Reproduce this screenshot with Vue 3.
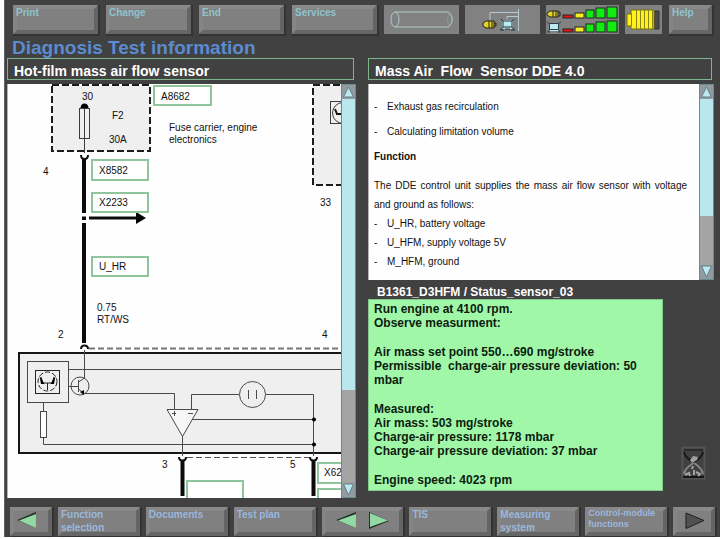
<script setup>
const menu = ['Print', 'Change', 'End', 'Services']

const infoTitle = 'Mass Air  Flow  Sensor DDE 4.0'

const leftKeys = ['Function selection', 'Documents', 'Test plan']
const rightKeys = [
  { label: 'TIS' },
  { label: 'Measuring system' },
  { label: 'Control-module functions', small: true },
]

const readings = [
  ['Run engine at 4100 rpm.', 'Observe measurment:'],
  ['Air mass set point 550…690 mg/stroke', 'Permissible  charge-air pressure deviation: 50 mbar'],
  [
    'Measured:',
    'Air mass: 503 mg/stroke',
    'Charge-air pressure: 1178 mbar',
    'Charge-air pressure deviation: 37 mbar',
  ],
  ['Engine speed: 4023 rpm'],
]
</script>

<template>
  <div class="screen">
    <header class="toolbar">
      <nav class="menu">
        <button v-for="item in menu" :key="item" class="key" type="button">{{ item }}</button>
      </nav>
      <div class="indicators">
        <div class="indicator wide">
          <svg viewBox="0 0 75 29" fill="none" stroke="#b4cad0" stroke-width="1">
            <ellipse cx="11" cy="14.5" rx="4" ry="7.5" />
            <path d="M11 7H65L68 12V17L65 22H11" />
            <path d="M65 7Q62 14 65 22" stroke="#8f9a9d" />
          </svg>
        </div>
        <div class="indicator wide">
          <svg viewBox="0 0 75 29" fill="none">
            <path d="M25 15V7.500H54M42 14V11.500H54M53.500 4V26" stroke="#b4cad0" />
            <path d="M21 16H29V23H21L18 21V18Z" fill="#e2d32a" stroke="#242410" />
            <path d="M24 16V23M27 16V23M29 18H31V21H29" stroke="#242410" />
            <path d="M37 15H48V24H37Z" fill="#bdeaf2" />
            <path d="M38 16H47V22H38ZM35 25H39M46 25H50M36 14L38 16M49 14L47 16M38 22L36 25M47 22L49 25M40 24H45" stroke="#243238" />
          </svg>
        </div>
        <div class="indicator levels">
          <svg viewBox="0 0 73 29" stroke="#222" stroke-width="1">
            <path d="M4 6H12V12H4L1 10V8Z" fill="#e2d32a" />
            <path d="M7 6V12M10 6V12M12 7H14V11H12" fill="none" />
            <path d="M3 18H13V26H3Z" fill="#bdeaf2" stroke="none" />
            <path d="M3.500 18.500H12.500V24.500H3.500ZM1 27H4M12 27H15M1 17L4 19M15 17L12 19M4 24L2 27M12 24L14 27" fill="none" stroke="#28404a" />
            <g v-for="row in [0, 14]" :key="row">
              <rect x="17" :y="10 + row" width="10" height="3" fill="#e01818" />
              <rect x="29" :y="8 + row" width="9" height="5" fill="#f7ee1f" />
              <rect x="40" :y="5 + row" width="8" height="8" fill="#10ed10" />
              <rect x="50" :y="3 + row" width="9" height="10" fill="#10ed10" />
              <rect x="61" :y="2 + row" width="10" height="11" fill="#10ed10" />
            </g>
          </svg>
        </div>
        <div class="indicator battery">
          <svg viewBox="0 0 37 29">
            <path d="M29 6H34V24H29Z" fill="#4a4a4a" stroke="#303030" />
            <path d="M6 5H29V24H6V21H2V9H6Z" fill="#fff21c" stroke="#77710c" />
            <path d="M6.500 8V21M11.500 5V24M15.500 5V24M19.500 5V24M23.500 5V24M27.500 5V24" stroke="#8a8416" />
          </svg>
        </div>
      </div>
      <button class="key" type="button">Help</button>
    </header>

    <h1>Diagnosis Test information</h1>

    <main class="columns">
      <section class="column">
        <h2>Hot-film mass air flow sensor</h2>
        <div class="pane diagram-pane">
          <svg class="diagram" viewBox="8 84 334 414" preserveAspectRatio="xMinYMin slice" role="img" aria-label="Sensor wiring diagram">
            <g fill="#efefef" stroke="#1c1c1c" stroke-width="2" stroke-dasharray="7 3">
              <rect x="52" y="85" width="98" height="66" />
              <rect x="313" y="85" width="60" height="100" />
            </g>
            <g fill="none" stroke="#3c3c3c">
              <rect x="79.500" y="108.500" width="10" height="30" />
              <path d="M84.500 108V153" stroke-width="1" />
              <rect x="330.500" y="101.500" width="30" height="22" />
              <circle cx="343" cy="113" r="10.500" />
              <path d="M335 109L337 114H343" stroke="#111" stroke-width="2" />
            </g>
            <path d="M80.500 108A4 4.500 0 1 1 88.500 108Z" />
            <path d="M81 155Q81 159 84.500 159T88 155" fill="none" stroke="#111" stroke-width="2" />
            <path d="M84 159V213M84 216.500V220M84 223V343" stroke="#0c0c0c" stroke-width="4" />
            <path d="M89 218H138" stroke="#0c0c0c" stroke-width="3" />
            <path d="M136 212L146 218L136 224Z" />

            <path d="M89 348.500H342" stroke="#777" stroke-width="2" stroke-dasharray="6 3" />
            <path d="M81 349Q81 345.500 84.500 345.500T88 349" fill="none" stroke="#111" stroke-width="2" />
            <rect x="19" y="353" width="340" height="100" fill="#efefef" stroke="#161616" stroke-width="2" />
            <g fill="none" stroke="#494949" stroke-width="1">
              <rect x="27.500" y="361.500" width="41" height="41" />
              <rect x="35.500" y="370.500" width="24" height="23" stroke="#222" />
              <circle cx="47.500" cy="381.500" r="9.500" stroke="#222" stroke-dasharray="5 2" />
              <path d="M68 369.500H342M84.500 350V378L78.500 382" />
              <circle cx="80" cy="386" r="9" />
              <path d="M68 386.500H78M78.500 380V392" />
              <path d="M78.500 389L84 393.500H174.500V409.500" />
              <path d="M167 409.500H198L182.500 436.500Z" fill="#f6f6f6" />
              <path d="M172 413.500H176M174.500 411V416M188 413.500H193" />
              <path d="M191.500 409V394.500H239M266 394.500H313.500V456M192 419.500H313.500" />
              <circle cx="252.500" cy="394.500" r="13" />
              <path d="M248.500 390V399M256.500 390V399" />
              <path d="M43.500 403V411M43.500 437.500V444.500H313.500M182.500 436V456" />
              <rect x="40.500" y="411.500" width="6" height="26" fill="#fff" />
            </g>
            <path d="M41 377L43 383H52L54 377M47.500 383V390" fill="none" stroke="#222" stroke-width="1" />
            <path d="M39.500 376L44.500 384L41 384ZM55.500 376L50.500 384L54 384ZM80 392L84 390V395Z" />
            <circle cx="314" cy="419.500" r="2" />
            <circle cx="314" cy="444.500" r="2" />

            <path d="M187 457.500H309" stroke="#555" stroke-width="1" stroke-dasharray="6 3" />
            <path d="M179 457Q179 460.500 182.500 460.500T186 457M310 457Q310 460.500 313.500 460.500T317 457" fill="none" stroke="#111" stroke-width="2" />
            <path d="M182.500 461V496M313.500 461V496" stroke="#0c0c0c" stroke-width="4" />

            <g fill="#fff" stroke="#8fc49c" stroke-width="2">
              <rect x="154" y="86" width="57" height="19" />
              <rect x="92" y="160" width="56" height="20" />
              <rect x="92" y="193" width="56" height="19" />
              <rect x="92" y="257" width="56" height="19" />
              <rect x="187" y="481" width="56" height="30" />
              <rect x="318" y="463" width="56" height="20" />
              <rect x="318" y="489" width="56" height="20" />
            </g>

            <g class="labels">
              <text x="82" y="100">30</text>
              <text x="112" y="119">F2</text>
              <text x="109" y="143">30A</text>
              <text x="161" y="100">A8682</text>
              <text x="169" y="131">Fuse carrier, engine</text>
              <text x="169" y="143">electronics</text>
              <text x="43" y="175">4</text>
              <text x="99" y="174">X8582</text>
              <text x="99" y="206">X2233</text>
              <text x="320" y="206">33</text>
              <text x="99" y="270">U_HR</text>
              <text x="97" y="311">0.75</text>
              <text x="97" y="323">RT/WS</text>
              <text x="58" y="338">2</text>
              <text x="322" y="338">4</text>
              <text x="162" y="468">3</text>
              <text x="290" y="468">5</text>
              <text x="324" y="476">X62</text>
            </g>
          </svg>
          <div class="scroll">
            <button class="arrow" type="button" aria-label="Scroll diagram up">
              <svg viewBox="0 0 12 14"><path d="M1 12L6 2L11 12Z" fill="#bfe9f0" stroke="#5f8087" /></svg>
            </button>
            <div class="rail rail-long"></div>
            <div class="thumb thumb-long"></div>
            <button class="arrow" type="button" aria-label="Scroll diagram down">
              <svg viewBox="0 0 12 14"><path d="M1 1L6 12L11 1Z" fill="#bfe9f0" stroke="#5f8087" /></svg>
            </button>
          </div>
        </div>
      </section>

      <section class="column">
        <h2>{{ infoTitle }}</h2>
        <div class="pane">
          <article class="info">
            <ul class="spaced">
              <li>Exhaust gas recirculation</li>
              <li>Calculating limitation volume</li>
            </ul>
            <h3>Function</h3>
            <p>The DDE control unit supplies the mass air flow sensor with voltage and ground as follows:</p>
            <ul>
              <li>U_HR, battery voltage</li>
              <li>U_HFM, supply voltage 5V</li>
              <li>M_HFM, ground</li>
            </ul>
          </article>
          <div class="scroll">
            <button class="arrow" type="button" aria-label="Scroll text up">
              <svg viewBox="0 0 12 14"><path d="M1 12L6 2L11 12Z" fill="#bfe9f0" stroke="#5f8087" /></svg>
            </button>
            <div class="rail rail-short"></div>
            <div class="thumb thumb-short"></div>
            <button class="arrow" type="button" aria-label="Scroll text down">
              <svg viewBox="0 0 12 14"><path d="M1 1L6 12L11 1Z" fill="#bfe9f0" stroke="#5f8087" /></svg>
            </button>
          </div>
        </div>
        <h3 class="status-title">B1361_D3HFM / Status_sensor_03</h3>
        <div class="status">
          <div class="readings">
            <div v-for="(group, index) in readings" :key="index">
              <p v-for="line in group" :key="line">{{ line }}</p>
            </div>
          </div>
          <svg class="hourglass" viewBox="0 0 26 34" fill="none">
            <rect x="1.500" y="1.500" width="22" height="31" stroke="#545454" stroke-width="2" />
            <path d="M3 4H22" stroke="#191919" stroke-width="1" />
            <path d="M3 6Q4 12 12.500 16Q21 12 22 6" stroke="#191919" stroke-width="2" />
            <path d="M5 11Q12 14 20 11L12.500 16Z" fill="#202020" />
            <path d="M9 14L12 10L17 11L16 14L11 17Z" fill="#a0a0a0" />
            <path d="M12.500 17Q4 22 3 28M13 17Q21 22 22 28" stroke="#858585" stroke-width="2" />
            <path d="M2 31H23" stroke="#151515" stroke-width="2" />
            <path d="M4 29L8 27L9 30M12 20L11 23M13 24V29M15 26L19 28L17 30" stroke="#a2a2a2" stroke-width="2" />
          </svg>
        </div>
      </section>
    </main>

    <footer class="keys">
      <button class="key glyph" type="button" aria-label="Back">
        <svg viewBox="0 0 42 29"><path d="M7 13L26 5V21Z" fill="#1f3325" /><path d="M9 13.500L26 7V21Z" fill="#93d9a4" /></svg>
      </button>
      <button v-for="label in leftKeys" :key="label" class="key" type="button">{{ label }}</button>
      <div class="key pager">
        <button type="button" aria-label="Previous page">
          <svg viewBox="0 0 41 29"><path d="M14 13L34 5V21Z" fill="#1f3325" /><path d="M16 13.500L34 7V21Z" fill="#93d9a4" /></svg>
        </button>
        <button type="button" aria-label="Next page">
          <svg viewBox="0 0 41 29"><path d="M6 5L26 14L6 22Z" fill="#1f3325" /><path d="M7 6L25 13.500L7 20Z" fill="#93d9a4" /></svg>
        </button>
      </div>
      <button v-for="item in rightKeys" :key="item.label" class="key" :class="{ small: item.small }" type="button">{{ item.label }}</button>
      <button class="key glyph" type="button" aria-label="Forward">
        <svg viewBox="0 0 42 29"><path d="M13 6L31 13.500L13 21.500Z" fill="#515151" stroke="#1e1e1e" /></svg>
      </button>
    </footer>
  </div>
</template>

<style>
body {
  background: #fdfdfd;
}
</style>

<style scoped>
.screen {
  box-sizing: border-box;
  display: flex;
  flex-direction: column;
  min-height: calc(100vh - 2px);
  margin-left: 4px;
  border-left: 1px solid #606468;
  background: #414141;
  font-family: "Liberation Sans", Arial, sans-serif;
}

h1,
h2,
h3,
p,
ul {
  margin: 0;
  padding: 0;
}

svg {
  display: block;
}

.toolbar {
  display: grid;
  grid-template-columns: 364fr 278fr 43fr;
  gap: 7px;
  padding: 5px 8px 0;
}

.menu {
  display: grid;
  grid-template-columns: repeat(4, minmax(0, 1fr));
  gap: 8px;
}

.indicators {
  display: grid;
  grid-template-columns: 75fr 75fr 73fr 37fr;
  gap: 6px;
}

.indicator {
  display: flex;
  justify-content: center;
  background: #818181;
}

.indicator svg {
  width: 100%;
  height: 29px;
}

.key {
  position: relative;
  isolation: isolate;
  min-width: 0;
  height: 29px;
  margin: 0;
  padding: 1px 3px;
  border: 0;
  background: #808080;
  box-shadow: 1px 1px 0 1px #333333;
  color: #8fc4cf;
  font: bold 10px/13px "Liberation Sans", Arial, sans-serif;
  text-align: left;
  display: flex;
  align-items: flex-start;
}

.key::before {
  content: "";
  position: absolute;
  inset: 0;
  z-index: -1;
  border: 4px solid;
  border-color: #898989 #646464 #666666 #858585;
}

.columns {
  display: grid;
  grid-template-columns: 349fr 346fr;
  gap: 12px;
  flex: 1;
  padding: 0 6px 0 2px;
}

.column {
  display: flex;
  flex-direction: column;
  min-width: 0;
}

h1 {
  padding: 4px 0 0 7px;
  color: #5b8bd0;
  font-size: 19px;
  line-height: 20px;
}

h2 {
  margin: 0 2px 4px 0;
  padding: 4px 6px 0;
  border: 1px solid #7fb58a;
  color: #fff;
  font-size: 14px;
  line-height: 16px;
  white-space: pre;
}

.pane {
  box-sizing: border-box;
  display: flex;
  background: #fefefe;
}

.diagram-pane {
  flex: 1;
}

.diagram {
  flex: 1;
  width: 0;
  min-height: 414px;
  border-left: 1px solid #b5b5b5;
  box-sizing: border-box;
}

.labels {
  font-size: 10px;
  fill: #111;
}

.scroll {
  box-sizing: border-box;
  display: flex;
  flex-direction: column;
  flex: none;
  width: 15px;
  border: 1px solid #668b93;
}

.arrow {
  height: 14px;
  padding: 0;
  border: 0;
  background: #929ba0;
}

.arrow svg {
  width: 100%;
  height: 14px;
}

.rail {
  background: #bae6ed;
}

.thumb {
  background: #a4a4a4;
}

.rail-long {
  flex: 292;
}

.thumb-long {
  flex: 93;
}

.rail-short {
  flex: 118;
}

.thumb-short {
  flex: 49;
}

.info {
  flex: 1;
  padding: 13px 12px 9px 5px;
  border-left: 1px solid #b5b5b5;
  color: #111;
  font-size: 10px;
  line-height: 19px;
}

.info h3 {
  margin-bottom: 10px;
  font-size: 10px;
}

.info p {
  text-align: justify;
}

.info ul {
  list-style: none;
}

.info li {
  display: flex;
}

.info li::before {
  content: "-";
  flex: none;
  width: 13px;
}

.spaced li {
  margin-bottom: 6px;
}

.status-title {
  margin-top: 5px;
  padding-left: 9px;
  color: #fff;
  font-size: 12px;
  line-height: 14px;
}

.status {
  display: grid;
  grid-template-columns: 295fr 51fr;
  align-items: end;
}

.readings {
  display: grid;
  gap: 15px;
  padding: 2px 5px 3px;
  border: 1px solid #82c98c;
  background: #a1f7a8;
  color: #0c1c0e;
  font-size: 12px;
  font-weight: bold;
  line-height: 14px;
  white-space: pre-wrap;
}

.hourglass {
  justify-self: center;
  width: 26px;
  height: 34px;
  margin: 0 0 11px 10px;
}

.keys {
  display: grid;
  grid-template-columns: 42fr repeat(7, minmax(0, 82fr)) 42fr;
  gap: 6px;
  padding: 9px 5px 1px;
}

.keys .key {
  color: #9ab8de;
}

.keys .glyph {
  padding: 0;
}

.keys .small {
  font-size: 9px;
  line-height: 11px;
}

.glyph svg,
.pager svg {
  width: 100%;
  height: 29px;
}

.pager {
  padding: 0;
}

.pager button {
  flex: 1;
  min-width: 0;
  padding: 0;
  border: 0;
  background: none;
}
</style>
